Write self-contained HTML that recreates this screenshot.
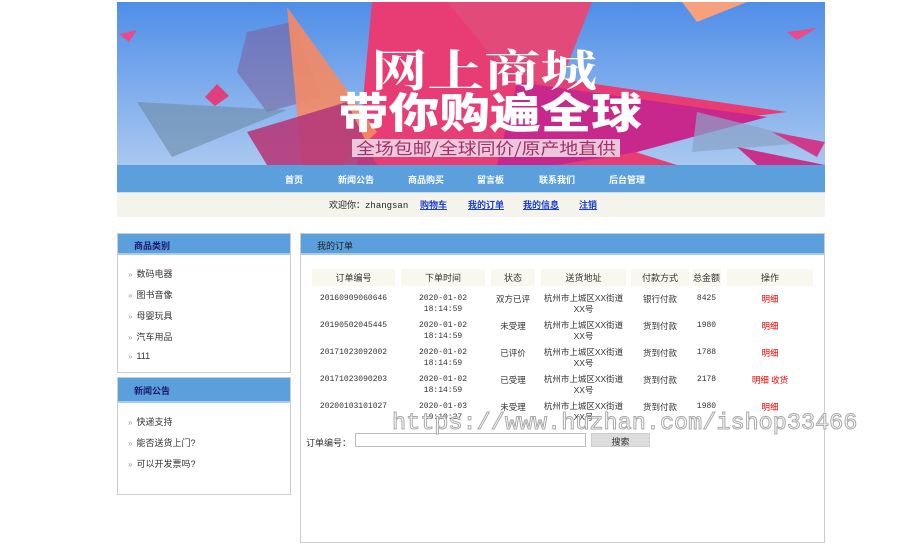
<!DOCTYPE html>
<html><head><meta charset="utf-8"><style>
*{margin:0;padding:0;box-sizing:border-box}
body{width:900px;height:539px;background:#fff;font-family:"Liberation Sans","Noto Sans CJK SC",sans-serif;font-size:9px;color:#333;position:relative;overflow:hidden}
.abs{position:absolute}
.nav{left:117px;top:165px;width:708px;height:27px;background:#5b9fdc;color:#fff;font-weight:bold;font-size:9px}
.nav span{position:absolute;top:8px}
.wel{left:117px;top:192px;width:708px;height:25px;background:#f4f4ec;border-top:1px solid #cde}
.wel span{position:absolute;top:5px}
.wel a{color:#1a3ccc;text-decoration:underline;font-weight:bold}
.box{border:1px solid #ccc;background:#fff}
.hd{background:#5b9fdc;border-bottom:2px solid #a8cbea;height:21px;color:#1a1a6a;font-weight:bold;padding:5px 0 0 16px}
.li{position:absolute;left:10px}
.li:before{content:"»";color:#99a;font-size:8px;margin-right:4px}
.th{position:absolute;top:269px;height:17px;background:#f8f8ee;text-align:center;padding-top:2px;font-size:9px}
.c{position:absolute;text-align:center;line-height:12px;font-size:8.5px}
.red{color:#e00}
</style></head><body>
<svg class="abs" style="left:117px;top:2px" width="708" height="163" viewBox="0 0 708 163">
<defs><linearGradient id="g" x1="0" y1="0" x2="0" y2="1"><stop offset="0" stop-color="#4f8ee8"/><stop offset="1" stop-color="#a9c8f0"/></linearGradient></defs>
<rect width="708" height="163" fill="url(#g)"/>
<polygon points="130,30 175,20 205,95 150,110 120,70" fill="#7a5f9a" opacity=".55"/>
<polygon points="20,100 170,108 55,155" fill="#6d8aa6" opacity=".6"/>
<polygon points="255,0 390,0 430,75 670,110 470,135 560,163 240,163" fill="#e83c74"/>
<polygon points="170,5 260,130 225,163 185,163" fill="#f58a64" opacity=".9"/>
<polygon points="330,0 475,0 440,90 380,60" fill="#e24a7a"/>
<polygon points="400,80 650,115 520,150 440,163 380,163" fill="#c8288c"/>
<polygon points="130,130 230,100 260,163 150,163" fill="#b63a7a" opacity=".9"/>
<polygon points="580,110 700,140 575,150" fill="#8aa2c6" opacity=".7"/>
<polygon points="565,0 630,0 580,20" fill="#f6a07c"/>
<polygon points="670,30 700,26 680,38" fill="#e84a8c"/>
<polygon points="2,32 20,28 12,40" fill="#e84a8c"/>
<polygon points="100,82 88,95 98,104 112,94" fill="#e0407a"/>
<polygon points="620,145 708,163 640,163" fill="#c8308a"/>
<polygon points="655,130 700,155 708,140" fill="#cf3b8c"/>
<text x="254" y="84" font-family="Noto Serif CJK SC,serif" font-size="44" fill="#fff" font-weight="bold" textLength="226" lengthAdjust="spacingAndGlyphs">网上商城</text>
<text x="221" y="126" font-family="Noto Sans CJK SC,sans-serif" font-size="42" fill="#fff" font-weight="900" textLength="304" lengthAdjust="spacingAndGlyphs">带你购遍全球</text>
<rect x="235" y="137" width="268" height="18" fill="#f0d8e4" opacity=".9"/>
<text x="239" y="152" font-family="Noto Sans CJK SC,sans-serif" font-size="16" fill="#a0306a" textLength="260" lengthAdjust="spacingAndGlyphs">全场包邮/全球同价/原产地直供</text>
</svg>
<div class="abs nav"><span style="left:168px">首页</span><span style="left:221px">新闻公告</span><span style="left:291px">商品购买</span><span style="left:360px">留言板</span><span style="left:422px">联系我们</span><span style="left:492px">后台管理</span></div>
<div class="abs wel"><span style="left:212px;color:#222">欢迎你：<span style="font-family:'Liberation Mono',monospace;position:static">zhangsan</span></span><span style="left:303px"><a>购物车</a></span><span style="left:351px"><a>我的订单</a></span><span style="left:406px"><a>我的信息</a></span><span style="left:462px"><a>注销</a></span></div>

<div class="abs box" style="left:117px;top:233px;width:174px;height:140px"><div class="hd">商品类别</div>
<div class="li" style="top:33px">数码电器</div><div class="li" style="top:54px">图书音像</div><div class="li" style="top:75px">母婴玩具</div><div class="li" style="top:96px">汽车用品</div><div class="li" style="top:117px">111</div></div>
<div class="abs box" style="left:117px;top:377px;width:174px;height:118px"><div class="hd" style="height:25px;padding-top:6px">新闻公告</div>
<div class="li" style="top:37px">快递支持</div><div class="li" style="top:58px">能否送货上门?</div><div class="li" style="top:79px">可以开发票吗?</div></div>

<div class="abs box" style="left:300px;top:233px;width:525px;height:310px"><div class="hd" style="color:#222;font-weight:normal">我的订单</div></div>
<div class="th" style="left:312px;width:83px">订单编号</div>
<div class="th" style="left:401px;width:84px">下单时间</div>
<div class="th" style="left:491px;width:44px">状态</div>
<div class="th" style="left:541px;width:85px">送货地址</div>
<div class="th" style="left:631px;width:58px">付款方式</div>
<div class="th" style="left:692px;width:29px">总金额</div>
<div class="th" style="left:727px;width:86px">操作</div>
<div id="rows"></div>
<script>
var d=[["20160909060646","2020-01-02","18:14:59","双方已评","银行付款","8425","明细"],["20190502045445","2020-01-02","18:14:59","未受理","货到付款","1980","明细"],["20171023092002","2020-01-02","18:14:59","已评价","货到付款","1788","明细"],["20171023090203","2020-01-02","18:14:59","已受理","货到付款","2178","明细 收货"],["20200103101027","2020-01-03","10:10:27","未受理","货到付款","1980","明细"]];
var h="";d.forEach(function(r,i){var y=293+i*27;
h+='<div class="c" style="left:312px;width:83px;top:'+y+'px;font-family:Liberation Mono,monospace;font-size:8px">'+r[0]+'</div>'+
'<div class="c" style="left:401px;width:84px;top:'+y+'px;font-family:Liberation Mono,monospace;font-size:8px;line-height:11px">'+r[1]+'<br>'+r[2]+'</div>'+
'<div class="c" style="left:491px;width:44px;top:'+y+'px">'+r[3]+'</div>'+
'<div class="c" style="left:541px;width:85px;top:'+y+'px;line-height:11px">杭州市上城区XX街道<br>XX号</div>'+
'<div class="c" style="left:631px;width:58px;top:'+y+'px">'+r[4]+'</div>'+
'<div class="c" style="left:692px;width:29px;top:'+y+'px;font-family:Liberation Mono,monospace;font-size:8px">'+r[5]+'</div>'+
'<div class="c red" style="left:727px;width:86px;top:'+y+'px">'+r[6]+'</div>';});
document.getElementById("rows").innerHTML=h;
</script>
<div class="abs" style="left:306px;top:436px">订单编号：</div>
<div class="abs" style="left:355px;top:433px;width:231px;height:14px;border:1px solid #bbb;background:#fff"></div>
<div class="abs" style="left:591px;top:433px;width:59px;height:14px;background:#ddd;border:1px solid #ccc;text-align:center;font-size:9px;padding-top:1px">搜索</div>
<div class="abs" style="left:392px;top:410px;font-family:'Liberation Mono',monospace;font-size:23.5px;color:#fff;-webkit-text-stroke:1px #aaa;white-space:nowrap">https://www.huzhan.com/ishop33466</div>
</body></html>
